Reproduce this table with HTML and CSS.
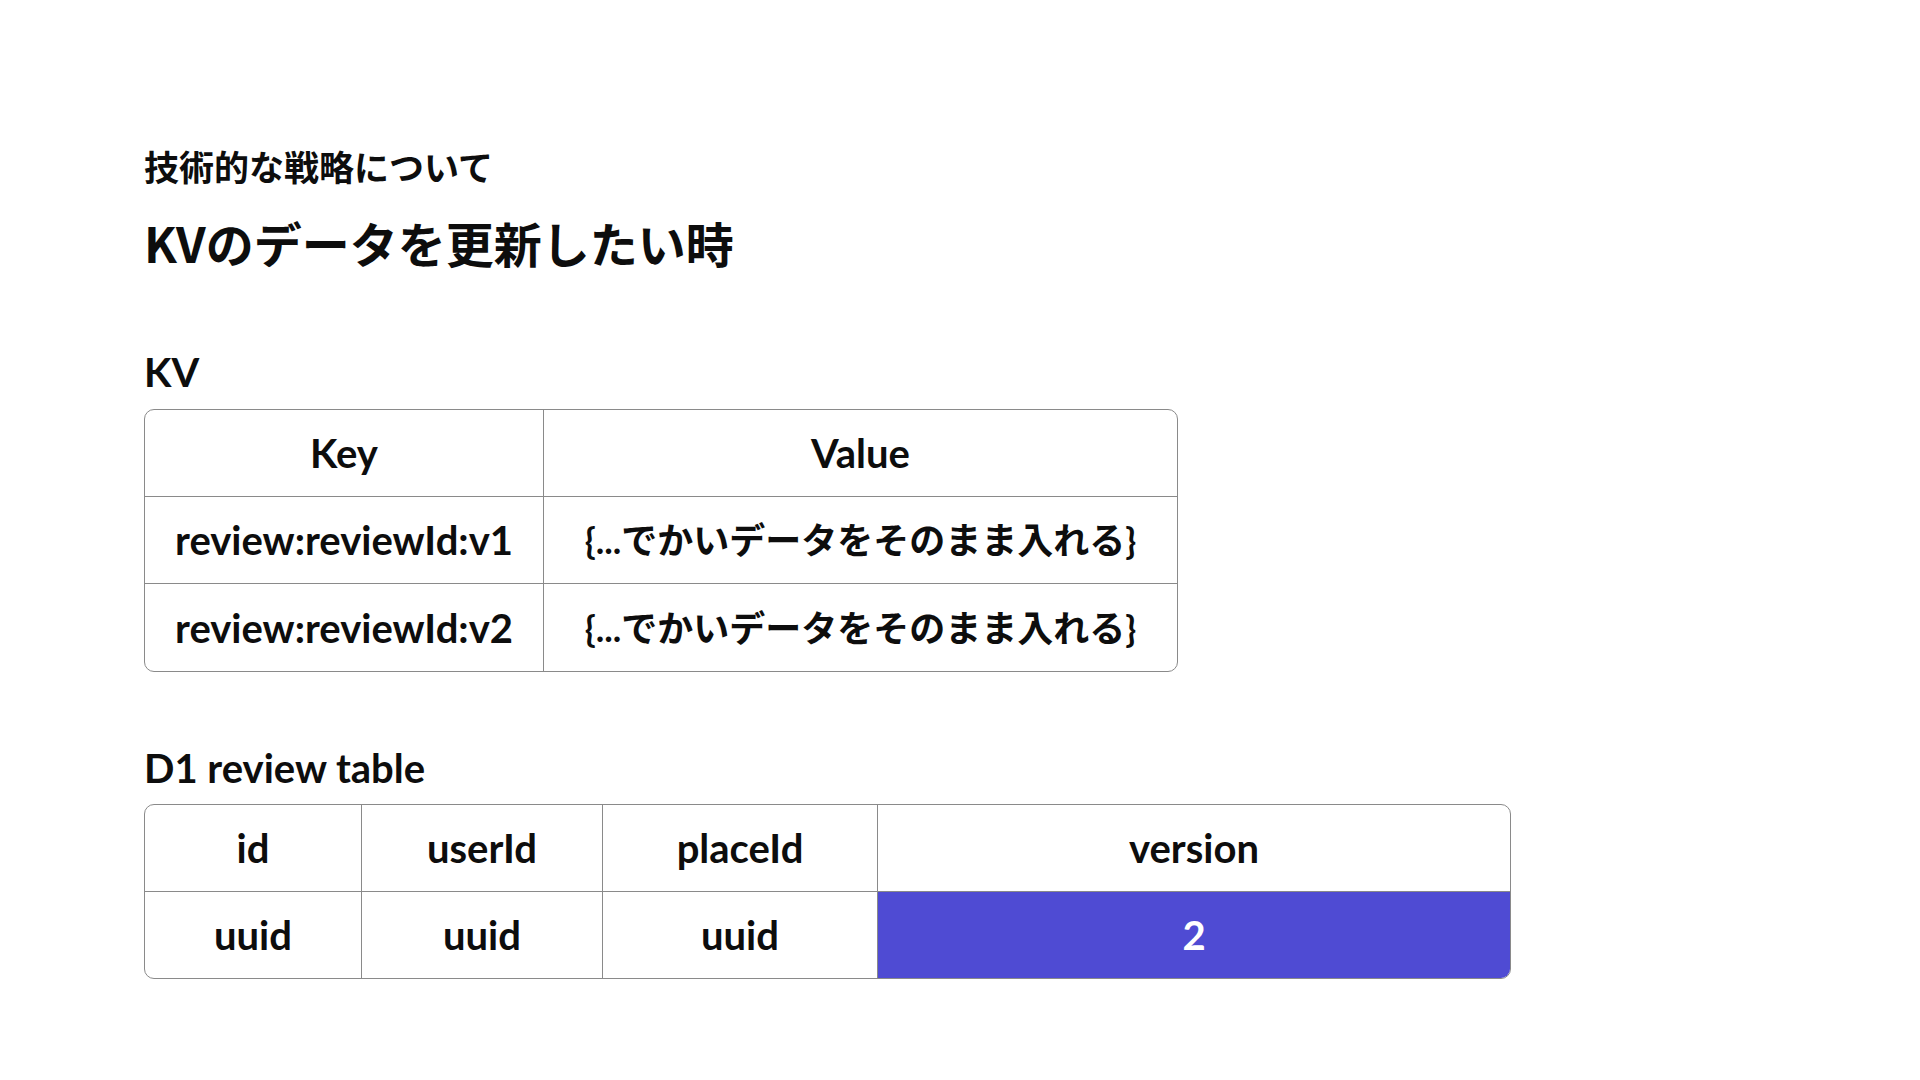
FILE: index.html
```html
<!DOCTYPE html>
<html lang="ja">
<head>
<meta charset="utf-8">
<title>KVのデータを更新したい時</title>
<link rel="stylesheet" href="styles.css">
</head>
<body>
<main class="slide">
  <p class="eyebrow">技術的な戦略について</p>
  <h1 class="title">KVのデータを更新したい時</h1>

  <h2 class="section kv-head">KV</h2>
  <div class="table table-kv">
    <div class="cell">Key</div>
    <div class="cell last-col">Value</div>
    <div class="cell">review:reviewId:v1</div>
    <div class="cell cjk last-col">{...でかいデータをそのまま入れる}</div>
    <div class="cell last-row">review:reviewId:v2</div>
    <div class="cell cjk last-col last-row">{...でかいデータをそのまま入れる}</div>
  </div>

  <h2 class="section d1-head">D1 review table</h2>
  <div class="table table-d1">
    <div class="cell">id</div>
    <div class="cell">userId</div>
    <div class="cell">placeId</div>
    <div class="cell last-col">version</div>
    <div class="cell last-row">uuid</div>
    <div class="cell last-row">uuid</div>
    <div class="cell last-row">uuid</div>
    <div class="cell last-col last-row highlight">2</div>
  </div>
</main>
</body>
</html>
```

FILE: styles.css
```css
html, body {
  margin: 0;
  padding: 0;
  background: #ffffff;
}

body {
  color: #0d0d0d;
  font-family: "Lato", "Noto Sans CJK JP", sans-serif;
}

.slide {
  padding: 0 0 0 144px;
  width: 1920px;
  height: 1080px;
  box-sizing: border-box;
  display: flex;
  flex-direction: column;
  align-items: flex-start;
}

.eyebrow {
  margin: 148px 0 0 0;
  font-family: "Noto Sans CJK JP", sans-serif;
  font-weight: 700;
  font-size: 35px;
  line-height: 35px;
}

.title {
  margin: 35px 0 0 0;
  font-family: "Noto Sans CJK JP", sans-serif;
  font-weight: 700;
  font-size: 48px;
  line-height: 48px;
}

.section {
  margin: 0;
  font-weight: 700;
  font-size: 40px;
  line-height: 40px;
}

.kv-head {
  margin-top: 86px;
}

.d1-head {
  margin-top: 76px;
}

.table {
  display: grid;
  border: 1px solid #8a8a8a;
  border-radius: 10px;
  overflow: hidden;
  margin-top: 17px;
}

.table-kv {
  grid-template-columns: 399px 633px;
  grid-auto-rows: 87px;
}

.table-d1 {
  margin-top: 16px;
  grid-template-columns: 217px 241px 275px 632px;
  grid-template-rows: 87px 86px;
}

.cell {
  display: flex;
  align-items: center;
  justify-content: center;
  border-right: 1px solid #8a8a8a;
  border-bottom: 1px solid #8a8a8a;
  font-weight: 700;
  font-size: 40px;
  line-height: 1;
  white-space: nowrap;
}

.cell.cjk {
  font-size: 36px;
}

.cell.last-col {
  border-right: none;
}

.cell.last-row {
  border-bottom: none;
}

.cell.highlight {
  background: #4f4bd3;
  color: #ffffff;
}
```
